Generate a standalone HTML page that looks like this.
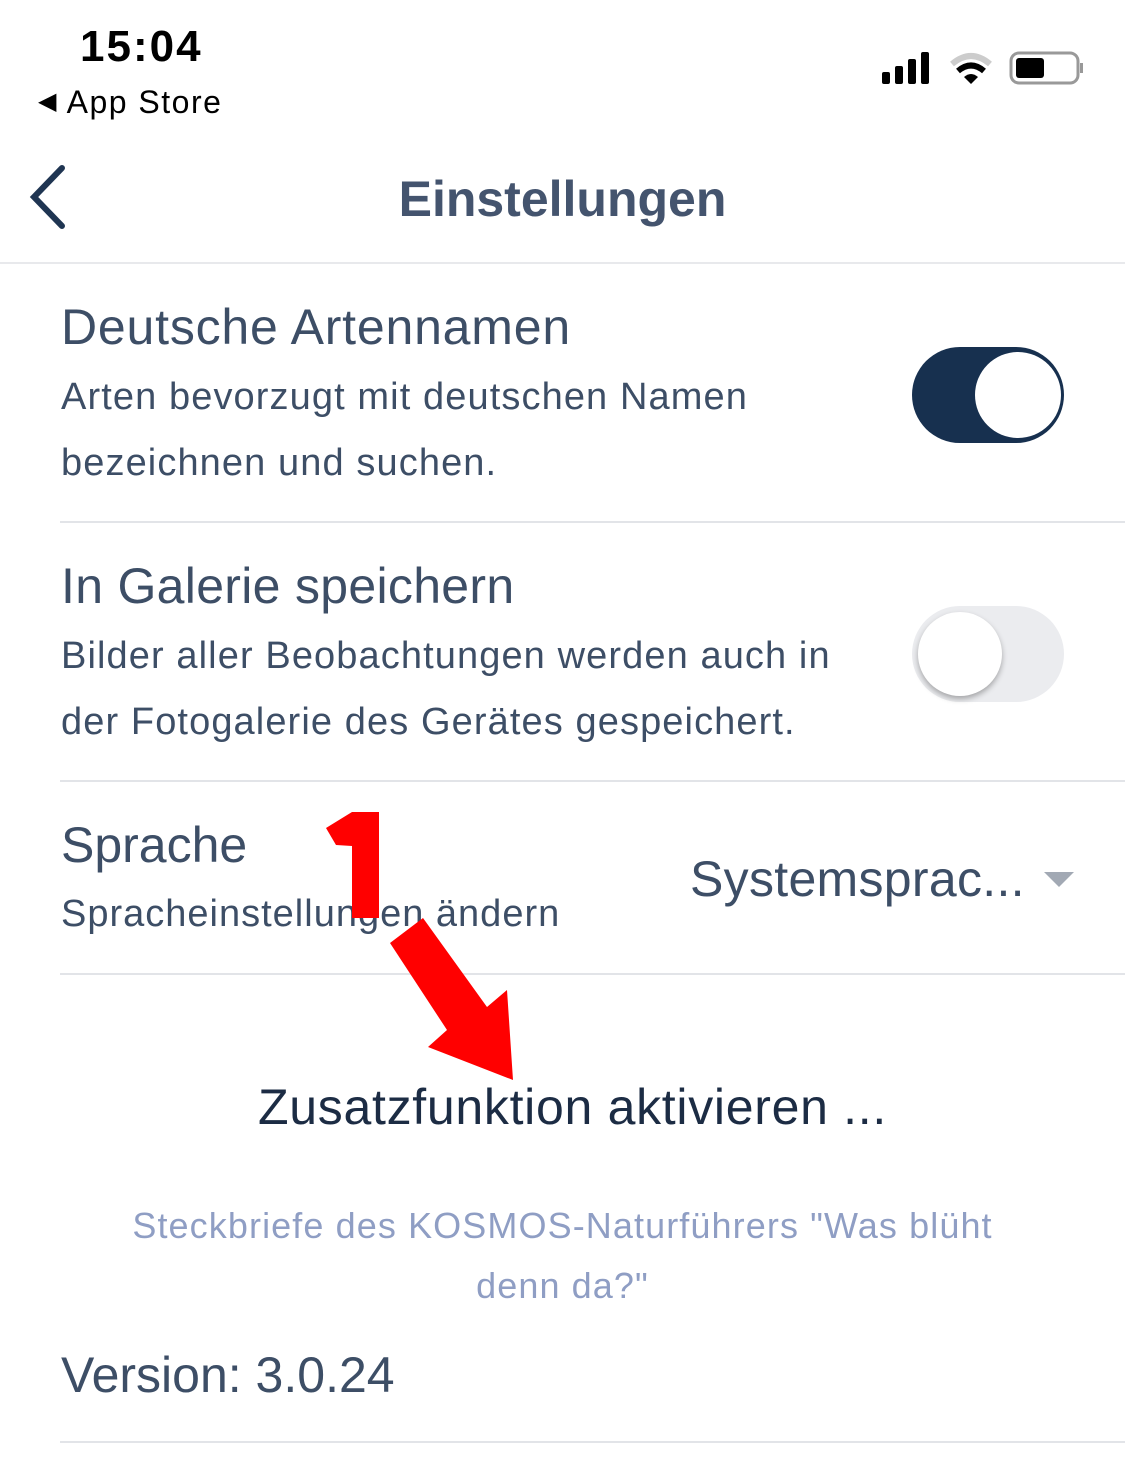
<!DOCTYPE html>
<html><head><meta charset="utf-8"><style>
body{margin:0;width:1125px;height:1469px;background:#fff;font-family:"Liberation Sans",sans-serif;position:relative;overflow:hidden;color:#3d4e66}
.a{position:absolute;white-space:nowrap}
.hr{position:absolute;left:60px;right:0;height:2px;background:#e2e4e8}
.b{font-size:38px;line-height:66px;letter-spacing:1.1px}
</style></head><body>
<div class="a" style="left:80px;top:22px;font-size:44px;font-weight:bold;color:#000;letter-spacing:2px">15:04</div>
<div class="a" style="left:38px;top:84px;font-size:32px;color:#000;letter-spacing:1.5px"><span style="font-size:24px;position:relative;top:-4px">◀</span> App Store</div>
<svg class="a" style="left:880px;top:50px" width="205" height="40">
<rect x="2" y="22" width="8" height="12" rx="2"/><rect x="15" y="16" width="8" height="18" rx="2"/><rect x="28" y="9" width="8" height="25" rx="2"/><rect x="41" y="2" width="8" height="32" rx="2"/>
<path d="M72 14 Q91 -2 110 14" stroke="#ccc" stroke-width="6" fill="none"/><path d="M78 21 Q91 10 104 21" stroke="#000" stroke-width="6" fill="none"/><path d="M84 27 L91 34 L98 27 Q91 21 84 27Z"/>
<rect x="131" y="3" width="67" height="30" rx="8" fill="none" stroke="#999" stroke-width="3"/><rect x="136" y="8" width="28" height="20" rx="3"/><rect x="200" y="13" width="3" height="10" fill="#999"/>
</svg>
<svg class="a" style="left:26px;top:164px" width="50" height="70"><path d="M36 4 L8 33 L36 62" stroke="#1f3552" stroke-width="6" fill="none" stroke-linecap="round"/></svg>
<div class="a" style="left:0;width:1125px;text-align:center;top:170px;font-size:50px;font-weight:bold;color:#44546e">Einstellungen</div>
<div class="a" style="left:0;right:0;top:262px;height:2px;background:#e8e9ec"></div>

<div class="a" style="left:61px;top:298px;font-size:50px;letter-spacing:0.8px">Deutsche Artennamen</div>
<div class="a b" style="left:61px;top:364px">Arten bevorzugt mit deutschen Namen<br>bezeichnen und suchen.</div>
<div class="a" style="left:912px;top:347px;width:152px;height:96px;border-radius:48px;background:#17304f"></div>
<div class="a" style="left:975px;top:352px;width:86px;height:86px;border-radius:50%;background:#fff"></div>
<div class="hr" style="top:521px"></div>

<div class="a" style="left:61px;top:557px;font-size:50px;letter-spacing:0.3px">In Galerie speichern</div>
<div class="a b" style="left:61px;top:623px">Bilder aller Beobachtungen werden auch in<br>der Fotogalerie des Gerätes gespeichert.</div>
<div class="a" style="left:912px;top:606px;width:152px;height:96px;border-radius:48px;background:#ebecef"></div>
<div class="a" style="left:918px;top:612px;width:84px;height:84px;border-radius:50%;background:#fff;box-shadow:0 3px 6px rgba(0,0,0,.3)"></div>
<div class="hr" style="top:780px"></div>

<div class="a" style="left:61px;top:816px;font-size:50px">Sprache</div>
<div class="a" style="left:61px;top:893px;font-size:38px;letter-spacing:1px">Spracheinstellungen ändern</div>
<div class="a" style="left:690px;top:850px;font-size:50px;letter-spacing:0.3px">Systemsprac...</div>
<svg class="a" style="left:1042px;top:870px" width="34" height="20"><path d="M2 2 H32 L17 17Z" fill="#a2a9b4"/></svg>
<div class="hr" style="top:973px"></div>

<svg class="a" style="left:0;top:0" width="1125" height="1469"><g fill="#f00">
<path d="M326 828 L352 812 L379 812 L379 918 L352 918 L352 846 L336 845Z"/>
<path d="M390 943 L423 918 L487 1007 L507 990 L513 1080 L428 1047 L447 1030Z"/></g></svg>

<div class="a" style="left:0;width:1125px;text-align:center;top:1078px;font-size:50px;color:#1c2c44;padding-left:10px;letter-spacing:0.7px">Zusatzfunktion aktivieren ...</div>
<div class="a" style="left:0;width:1125px;text-align:center;top:1196px;font-size:36px;line-height:60px;color:#8f9ec4;letter-spacing:1.1px">Steckbriefe des KOSMOS-Naturführers "Was blüht<br>denn da?"</div>
<div class="a" style="left:61px;top:1346px;font-size:50px">Version: 3.0.24</div>
<div class="hr" style="top:1441px"></div>
</body></html>
